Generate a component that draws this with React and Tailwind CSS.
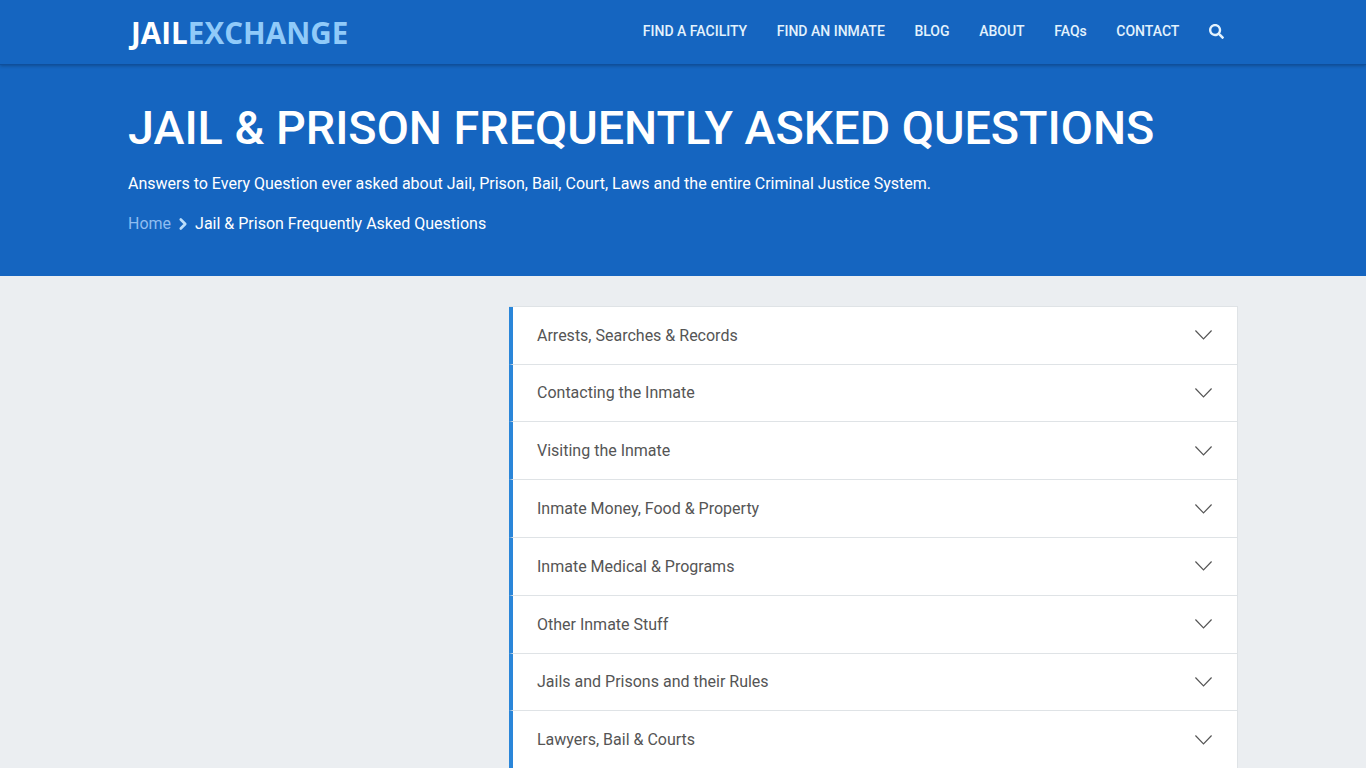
import { ChevronRight } from 'lucide-react';
import { FaSearch } from 'react-icons/fa';

const navLinks = ['FIND A FACILITY', 'FIND AN INMATE', 'BLOG', 'ABOUT', 'FAQs', 'CONTACT'];

const topics = [
  'Arrests, Searches & Records',
  'Contacting the Inmate',
  'Visiting the Inmate',
  'Inmate Money, Food & Property',
  'Inmate Medical & Programs',
  'Other Inmate Stuff',
  'Jails and Prisons and their Rules',
  'Lawyers, Bail & Courts',
];

const App = () => {
  return (
    <div className="h-screen overflow-hidden bg-[#ebeef1] font-['Roboto',sans-serif]">
      <header className="relative z-10 h-[65px] bg-[#1565c0] border-b border-[#0f4f9c] shadow-[0_1px_3px_rgba(0,0,0,0.25)]">
        <div className="mx-auto flex h-full w-[1110px] items-start justify-between">
          <div className="mt-[15px] ml-[2px] flex pl-[1px] font-['Open_Sans',sans-serif] text-[29.6px] leading-[36px] font-bold tracking-[0.03px]">
            <span className="text-white">JAIL</span>
            <span className="text-[#90caf9]">EXCHANGE</span>
          </div>
          <nav className="mt-[21px] mr-[14px] flex items-center gap-[29.6px] text-sm leading-5 font-medium text-[#e3f2fd]">
            {navLinks.map((link) => (
              <a key={link} href="#">{link}</a>
            ))}
            <FaSearch size={15} className="text-[#e3f2fd]" />
          </nav>
        </div>
      </header>

      <section className="h-[211px] bg-[#1565c0]">
        <div className="mx-auto w-[1110px] pt-[33.5px] text-white">
          <h1 className="text-[46.7px] leading-[58px] font-medium">JAIL &amp; PRISON FREQUENTLY ASKED QUESTIONS</h1>
          <p className="mt-[15.5px] text-base leading-6">
            Answers to Every Question ever asked about Jail, Prison, Bail, Court, Laws and the entire Criminal Justice System.
          </p>
          <div className="mt-4 flex items-center text-base leading-6">
            <a href="#" className="text-[#90bdf0]">Home</a>
            <ChevronRight size={18} strokeWidth={3.5} className="mx-[3px] text-[#bbdefb]" />
            <span>Jail &amp; Prison Frequently Asked Questions</span>
          </div>
        </div>
      </section>

      <main className="mx-auto flex w-[1110px] justify-end pt-[29.8px]">
        <div className="w-[729px] border-t border-r border-[#dfe3e6] bg-white">
          {topics.map((topic) => (
            <div
              key={topic}
              className="flex h-[57.8px] items-center justify-between border-b border-[#dfe3e6] border-l-4 border-l-[#2a86d9] pr-[25px] pl-6 text-base text-[#555]"
            >
              <span className="pt-[0.8px]">{topic}</span>
              <svg width="17" height="10" viewBox="0 0 17 10" fill="none" stroke="#555" strokeWidth="1.2">
                <polyline points="0.4,0.5 8.5,9 16.6,0.5" />
              </svg>
            </div>
          ))}
        </div>
      </main>
    </div>
  );
};

export default App;
